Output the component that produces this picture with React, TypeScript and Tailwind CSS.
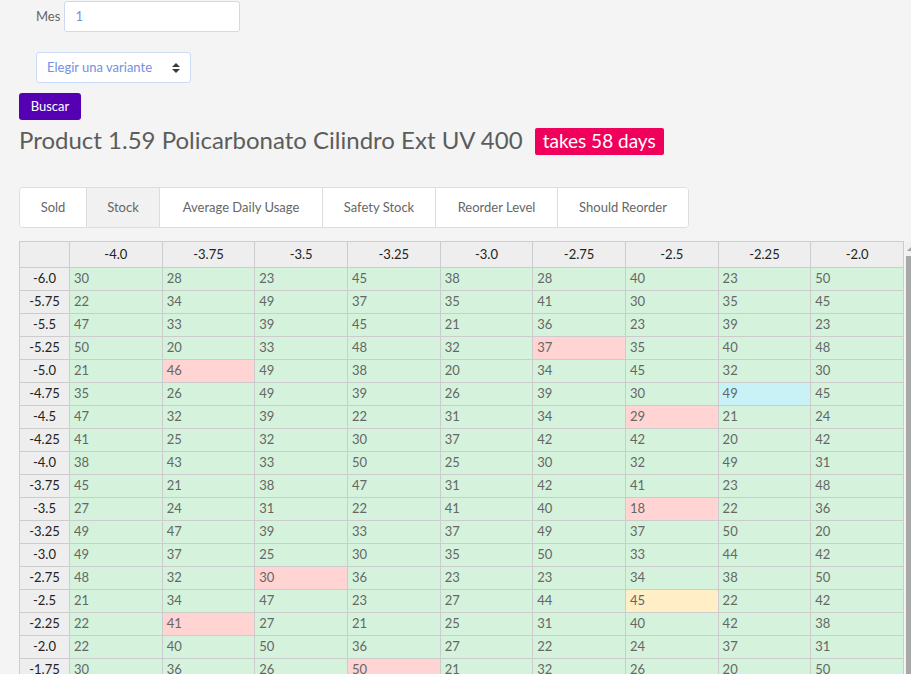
import { useState } from 'react';

const columns = ['-4.0', '-3.75', '-3.5', '-3.25', '-3.0', '-2.75', '-2.5', '-2.25', '-2.0'];

const rows: [string, number[]][] = [
  ['-6.0', [30, 28, 23, 45, 38, 28, 40, 23, 50]],
  ['-5.75', [22, 34, 49, 37, 35, 41, 30, 35, 45]],
  ['-5.5', [47, 33, 39, 45, 21, 36, 23, 39, 23]],
  ['-5.25', [50, 20, 33, 48, 32, 37, 35, 40, 48]],
  ['-5.0', [21, 46, 49, 38, 20, 34, 45, 32, 30]],
  ['-4.75', [35, 26, 49, 39, 26, 39, 30, 49, 45]],
  ['-4.5', [47, 32, 39, 22, 31, 34, 29, 21, 24]],
  ['-4.25', [41, 25, 32, 30, 37, 42, 42, 20, 42]],
  ['-4.0', [38, 43, 33, 50, 25, 30, 32, 49, 31]],
  ['-3.75', [45, 21, 38, 47, 31, 42, 41, 23, 48]],
  ['-3.5', [27, 24, 31, 22, 41, 40, 18, 22, 36]],
  ['-3.25', [49, 47, 39, 33, 37, 49, 37, 50, 20]],
  ['-3.0', [49, 37, 25, 30, 35, 50, 33, 44, 42]],
  ['-2.75', [48, 32, 30, 36, 23, 23, 34, 38, 50]],
  ['-2.5', [21, 34, 47, 23, 27, 44, 45, 22, 42]],
  ['-2.25', [22, 41, 27, 21, 25, 31, 40, 42, 38]],
  ['-2.0', [22, 40, 50, 36, 27, 22, 24, 37, 31]],
  ['-1.75', [30, 36, 26, 50, 21, 32, 26, 20, 50]],
];

// Highlighted cells, keyed by "row label/column label".
const highlights: Record<string, string> = {
  '-5.25/-2.75': 'bg-[#ffd4d3]',
  '-5.0/-3.75': 'bg-[#ffd4d3]',
  '-4.75/-2.25': 'bg-[#c9f2f7]',
  '-4.5/-2.5': 'bg-[#ffd4d3]',
  '-3.5/-2.5': 'bg-[#ffd4d3]',
  '-2.75/-3.5': 'bg-[#ffd4d3]',
  '-2.5/-2.5': 'bg-[#ffeec6]',
  '-2.25/-3.75': 'bg-[#ffd4d3]',
  '-1.75/-3.25': 'bg-[#ffd4d3]',
};

const tabs = [
  { label: 'Sold', width: 'w-[67px]' },
  { label: 'Stock', width: 'w-[73px]' },
  { label: 'Average Daily Usage', width: 'w-[163px]' },
  { label: 'Safety Stock', width: 'w-[113px]' },
  { label: 'Reorder Level', width: 'w-[122px]' },
  { label: 'Should Reorder', width: 'w-[130px]' },
];

function SearchForm() {
  const [month, setMonth] = useState('1');
  return (
    <form className="flex flex-col items-start" onSubmit={(e) => e.preventDefault()}>
      <div className="ml-[17px] flex items-center gap-1">
        <label htmlFor="month" className="pb-[2px]">
          Mes
        </label>
        <input
          id="month"
          value={month}
          onChange={(e) => setMonth(e.target.value)}
          className="h-[31px] w-44 rounded-[3px] border border-[#cbdaf7] bg-white px-[10px] pb-[2px] text-[#7390e3] outline-none"
        />
      </div>
      <div className="relative mt-5 ml-[17px]">
        <select
          aria-label="Variante"
          className="h-[31px] w-[155px] appearance-none rounded-[3px] border border-[#cbdaf7] bg-white px-[10px] pb-[2px] text-[#7390e3] outline-none"
        >
          <option>Elegir una variante</option>
        </select>
        <svg viewBox="0 0 8 10" className="pointer-events-none absolute top-[11px] right-[11px] h-[10px] w-2" fill="#343a40">
          <path d="M4 0 8 4H0zM0 6h8L4 10z" />
        </svg>
      </div>
      <button type="submit" className="mt-[10px] h-[27px] w-[62px] rounded-[3px] bg-[#5600b4] pb-[2px] text-white">
        Buscar
      </button>
    </form>
  );
}

function StockTable() {
  return (
    <table className="w-full table-fixed border-collapse">
      <colgroup>
        <col className="w-[50px]" />
        {columns.map((c) => (
          <col key={c} />
        ))}
      </colgroup>
      <thead>
        <tr className="h-[26px] bg-[#eeeeee] text-[#222222]">
          <td className="border border-[#cccccc]" />
          {columns.map((c) => (
            <th key={c} scope="col" className="border border-[#cccccc] p-0 pb-[2px] font-normal">
              {c}
            </th>
          ))}
        </tr>
      </thead>
      <tbody>
        {rows.map(([label, values]) => (
          <tr key={label} className="h-[23px] align-top">
            <th scope="row" className="border border-[#cccccc] bg-[#eeeeee] p-0 font-normal text-[#222222]">
              {label}
            </th>
            {values.map((v, i) => (
              <td
                key={columns[i]}
                className={`border border-[#cccccc] px-1 py-0 ${highlights[`${label}/${columns[i]}`] ?? 'bg-[#d5f3dc]'}`}
              >
                {v}
              </td>
            ))}
          </tr>
        ))}
      </tbody>
    </table>
  );
}

export default function App() {
  const [active, setActive] = useState('Stock');
  return (
    <div className="flex h-screen flex-col overflow-hidden bg-[#f4f4f4] pt-px pl-[19px] font-['Lato',sans-serif] text-[13px] leading-[20px] text-[#666666]">
      <SearchForm />
      <h1 className="mt-1 flex items-center gap-3 text-[24px] leading-[32px] whitespace-nowrap text-[#5c5c5c]">
        <span className="pb-[2px]">Product 1.59 Policarbonato Cilindro Ext UV 400</span>
        <span className="rounded-[2px] bg-[#f0005a] px-2 pb-px text-[19px] leading-[26px] text-white">takes 58 days</span>
      </h1>
      <div role="tablist" className="mt-[29px] flex shrink-0 self-start overflow-hidden rounded border border-[#dcdde3] bg-white">
        {tabs.map((t) => (
          <button
            key={t.label}
            type="button"
            role="tab"
            aria-selected={active === t.label}
            onClick={() => setActive(t.label)}
            className={`h-[39px] border-r border-[#dcdde3] pb-[2px] whitespace-nowrap last:border-r-0 ${t.width} ${
              active === t.label ? 'bg-[#f1f1f1]' : 'bg-white'
            }`}
          >
            {t.label}
          </button>
        ))}
      </div>
      <div className="mt-[13px] flex min-h-0 flex-1 gap-px overflow-hidden">
        <div className="min-w-0 flex-1">
          <StockTable />
        </div>
        <div className="flex w-[6px] shrink-0 flex-col bg-[#f1f1f1] pl-px">
          <svg viewBox="0 0 5 15" className="h-[15px] w-[5px] shrink-0" fill="#a3a3a3">
            <path d="M5 6v4H1z" />
          </svg>
          <div className="flex-1 bg-[#a8a8a8]" />
        </div>
      </div>
    </div>
  );
}
